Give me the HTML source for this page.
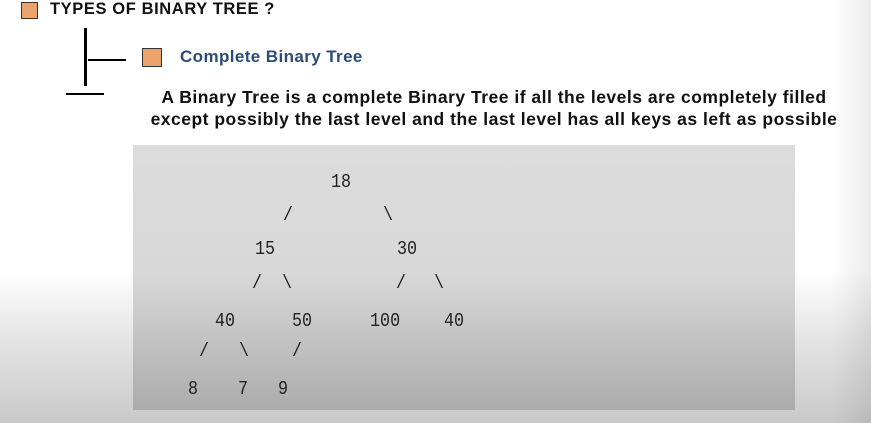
<!DOCTYPE html><html><head><style>
body{margin:0;width:871px;height:423px;overflow:hidden;position:relative;font-family:"Liberation Sans",Arial,sans-serif;
background:linear-gradient(to bottom,#fff 0,#fff 270px,#e4e4e4 340px,#c9c9c9 423px);}
.edge{position:absolute;right:0;top:0;width:40px;height:423px;background:linear-gradient(to right,rgba(0,0,0,0),rgba(0,0,0,0.08));}
.sq{position:absolute;background:#eba46e;border:1.5px solid #333;box-sizing:border-box}
.a{position:absolute;white-space:nowrap}
.box{position:absolute;left:133px;top:145px;width:662px;height:265px;background:linear-gradient(to bottom,#dcdcdc 0,#d8d8d8 130px,#acacac 265px)}
.m{position:absolute;font-family:"Liberation Mono","DejaVu Sans Mono",monospace;font-size:19px;color:#222;line-height:16px;transform:scaleX(0.88);transform-origin:left}
.ln{position:absolute;background:#000}
</style></head><body>
<div class="edge"></div>
<div class="sq" style="left:21px;top:2px;width:17px;height:17px"></div>
<div class="a" style="left:50px;top:0px;font-size:16.5px;letter-spacing:0.6px;font-weight:bold;color:#111">TYPES OF BINARY TREE ?</div>
<div class="ln" style="left:84px;top:28px;width:3px;height:58px"></div>
<div class="ln" style="left:88px;top:59px;width:38px;height:2px"></div>
<div class="sq" style="left:142px;top:48px;width:20px;height:19px"></div>
<div class="a" style="left:180px;top:47px;font-size:17px;letter-spacing:0.4px;font-weight:bold;color:#2d4b78">Complete Binary Tree</div>
<div class="ln" style="left:66px;top:93px;width:38px;height:2px"></div>
<div class="a" style="left:144px;top:86px;width:700px;text-align:center;font-size:17.5px;letter-spacing:0.5px;font-weight:bold;color:#111;line-height:22px">A Binary Tree is a complete Binary Tree if all the levels are completely filled<br>except possibly the last level and the last level has all keys as left as possible</div>
<div class="box"></div>
<div class="m" style="left:331px;top:174px">18</div>
<div class="m" style="left:283px;top:207px">/</div>
<div class="m" style="left:383px;top:207px">\</div>
<div class="m" style="left:255px;top:241px">15</div>
<div class="m" style="left:397px;top:241px">30</div>
<div class="m" style="left:252px;top:275px">/</div>
<div class="m" style="left:282px;top:275px">\</div>
<div class="m" style="left:396px;top:275px">/</div>
<div class="m" style="left:434px;top:275px">\</div>
<div class="m" style="left:215px;top:313px">40</div>
<div class="m" style="left:292px;top:313px">50</div>
<div class="m" style="left:370px;top:313px">100</div>
<div class="m" style="left:444px;top:313px">40</div>
<div class="m" style="left:199px;top:343px">/</div>
<div class="m" style="left:239px;top:343px">\</div>
<div class="m" style="left:292px;top:343px">/</div>
<div class="m" style="left:188px;top:381px">8</div>
<div class="m" style="left:238px;top:381px">7</div>
<div class="m" style="left:278px;top:381px">9</div>
</body></html>
